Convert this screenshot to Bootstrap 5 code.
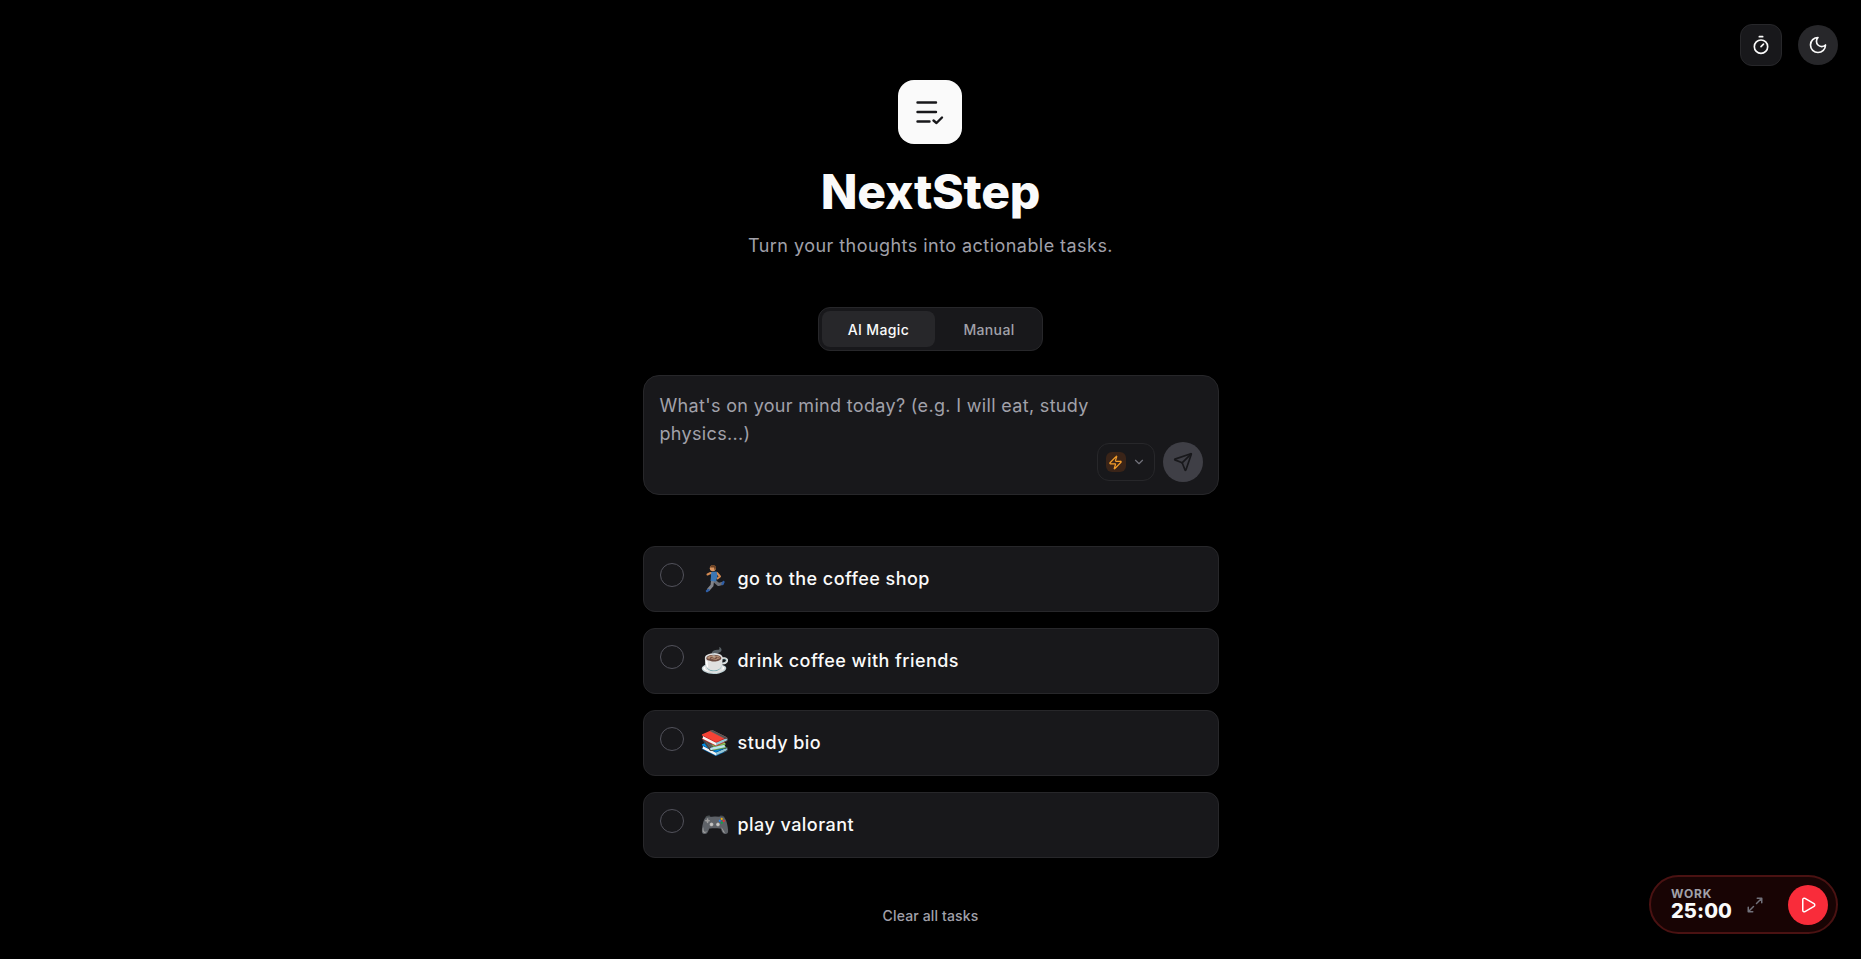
<!DOCTYPE html>
<html lang="en">
<head>
    <meta charset="UTF-8">
    <meta name="viewport" content="width=device-width, initial-scale=1.0">
    <title>NextStep</title>
    <link href="https://cdn.jsdelivr.net/npm/bootstrap@5.3.3/dist/css/bootstrap.min.css" rel="stylesheet">
    <style>
        html, body { height: 100%; }
        body { background-color: #000; color: #fafafa; font-family: "Inter", "Noto Sans", sans-serif; overflow: hidden; }
        .app-col { width: 576px; padding-top: 80px; }
        .logo-box { width: 64px; height: 64px; background: #fafafa; border-radius: 16px; margin-right: 1px; }
        .app-title { font-size: 48px; line-height: 48px; font-weight: 800; margin: 24px 0 0; color: #fafafa; letter-spacing: -0.2px; }
        .app-sub { font-size: 18px; line-height: 28px; color: #a1a1aa; margin: 16px 0 0; letter-spacing: 0.45px; }
        .mode-tabs { margin-top: 47px; width: 225px; height: 44px; padding: 3px; background: #18181b; border: 1px solid #27272a; border-radius: 12px; }
        .mode-tab { height: 36px; border-radius: 8px; font-size: 14px; font-weight: 500; color: #a1a1aa; letter-spacing: 0.35px; flex-shrink: 0; }
        .mode-tab.on { width: 113px; background: #27272a; color: #fafafa; }
        .mode-tab.off { width: 104px; margin-left: 2px; }
        .input-box { margin-top: 24px; height: 120px; background: #18181b; border: 1px solid #27272a; border-radius: 16px; padding: 16px 16px 0; }
        .input-hint { width: 460px; font-size: 18px; line-height: 28px; color: #a1a1aa; letter-spacing: 0.33px; }
        .input-tools { right: 15px; bottom: 12px; }
        .model-pick { width: 58px; height: 38px; border: 1px solid #27272a; border-radius: 12px; padding-left: 8px; gap: 6px; }
        .bolt-box { width: 20px; height: 20px; background: #3a2418; border-radius: 6px; }
        .send-btn { width: 40px; height: 40px; background: #3f3f46; }
        .task-list { margin-top: 51px; gap: 16px; }
        .task-row { height: 66px; background: #18181b; border: 1px solid #27272a; border-radius: 12px; padding: 16px; gap: 17px; }
        .task-check { width: 24px; height: 24px; border: 1px solid #52525b; border-radius: 50%; flex-shrink: 0; }
        .task-text { font-size: 18px; font-weight: 500; line-height: 32px; color: #fafafa; gap: 8px; letter-spacing: 0.45px; }
        .task-emoji { font-family: "Noto Color Emoji", sans-serif; font-size: 24px; width: 29px; text-align: center; letter-spacing: 0; }
        .clear-link { margin-top: 48px; font-size: 14px; font-weight: 500; line-height: 20px; color: #a1a1aa; letter-spacing: 0.15px; }
        .top-tools { top: 24px; right: 23px; gap: 16px; }
        .tool-square { width: 42px; height: 42px; background: #18181b; border: 1px solid #27272a; border-radius: 12px; }
        .tool-round { width: 40px; height: 40px; background: #27272a; }
        .timer-pill { right: 23px; bottom: 25px; width: 189px; height: 59px; background: #180404; border: 2px solid #4a1212; border-radius: 30px; padding: 0 7px 0 20px; }
        .timer-label { font-size: 12px; line-height: 12px; font-weight: 700; letter-spacing: 0.8px; color: #a1a1aa; }
        .timer-time { font-size: 20px; line-height: 22px; font-weight: 800; letter-spacing: 0.1px; color: #fafafa; }
        .timer-play { width: 40px; height: 40px; background: #f92c3a; }
        .timer-expand { margin-left: 14px; margin-right: 24px; }
    </style>
</head>
<body>
    <div class="position-fixed d-flex align-items-center top-tools">
        <div class="tool-square d-flex align-items-center justify-content-center">
            <svg width="20" height="20" viewBox="0 0 24 24" fill="none" stroke="#fafafa" stroke-width="2" stroke-linecap="round" stroke-linejoin="round"><line x1="10" x2="14" y1="2" y2="2"/><line x1="12" x2="15" y1="14" y2="11"/><circle cx="12" cy="14" r="8"/></svg>
        </div>
        <div class="tool-round rounded-circle d-flex align-items-center justify-content-center">
            <svg width="20" height="20" viewBox="0 0 24 24" fill="none" stroke="#fafafa" stroke-width="2" stroke-linecap="round" stroke-linejoin="round"><path d="M12 3a6 6 0 0 0 9 9 9 9 0 1 1-9-9Z"/></svg>
        </div>
    </div>

    <div class="app-col mx-auto d-flex flex-column align-items-center">
        <div class="logo-box d-flex align-items-center justify-content-center">
            <svg width="32" height="32" viewBox="0 0 32 32" fill="none" stroke="#18181b" stroke-width="2.4" stroke-linecap="round" stroke-linejoin="round"><path d="M3.5 6.5h18.5M3.5 16h18.5M3.5 25.5h12"/><path d="M19.5 24.5l3 2.5 5.5-5.5"/></svg>
        </div>
        <h1 class="app-title">NextStep</h1>
        <p class="app-sub">Turn your thoughts into actionable tasks.</p>

        <div class="mode-tabs d-flex">
            <div class="mode-tab on d-flex align-items-center justify-content-center">AI Magic</div>
            <div class="mode-tab off d-flex align-items-center justify-content-center">Manual</div>
        </div>

        <div class="input-box w-100 position-relative">
            <div class="input-hint">What's on your mind today? (e.g. I will eat, study physics...)</div>
            <div class="input-tools position-absolute d-flex align-items-center gap-2">
                <div class="model-pick d-flex align-items-center">
                    <div class="bolt-box d-flex align-items-center justify-content-center">
                        <svg width="15" height="15" viewBox="0 0 24 24" fill="none" stroke="#f59e2a" stroke-width="2" stroke-linecap="round" stroke-linejoin="round"><path d="M4 14a1 1 0 0 1-.78-1.63l9.9-10.2a.5.5 0 0 1 .86.46l-1.92 6.02A1 1 0 0 0 13 10h7a1 1 0 0 1 .78 1.63l-9.9 10.2a.5.5 0 0 1-.86-.46l1.92-6.02A1 1 0 0 0 11 14z"/></svg>
                    </div>
                    <svg width="14" height="14" viewBox="0 0 24 24" fill="none" stroke="#71717a" stroke-width="2" stroke-linecap="round" stroke-linejoin="round"><path d="m6 9 6 6 6-6"/></svg>
                </div>
                <div class="send-btn rounded-circle d-flex align-items-center justify-content-center">
                    <svg width="20" height="20" viewBox="0 0 24 24" fill="none" stroke="#18181b" stroke-width="2" stroke-linecap="round" stroke-linejoin="round"><path d="M14.536 21.686a.5.5 0 0 0 .937-.024l6.5-19a.496.496 0 0 0-.635-.635l-19 6.5a.5.5 0 0 0-.024.937l7.93 3.18a2 2 0 0 1 1.112 1.11z"/><path d="m21.854 2.147-10.94 10.939"/></svg>
                </div>
            </div>
        </div>

        <div class="task-list w-100 d-flex flex-column">
            <div class="task-row d-flex">
                <div class="task-check"></div>
                <div class="task-text d-flex">
                    <!-- installed emoji font has the runner facing left in teal, so it is drawn -->
                    <svg class="task-emoji" width="29" height="32" viewBox="7 4 29 32" fill="none" stroke-linecap="round" stroke-linejoin="round">
                        <path d="M20.5 22L24.5 25.5L28 24.5" stroke="#6e7077" stroke-width="3"/>
                        <path d="M18.5 22L18 26.5L14.5 30.5" stroke="#82848b" stroke-width="3"/>
                        <path d="M28.5 25L29.5 23" stroke="#2f5ea6" stroke-width="2.4"/>
                        <path d="M13 32L14.5 31" stroke="#2f5ea6" stroke-width="2.4"/>
                        <path d="M23 14L26 17.5L23.5 19.5" stroke="#d38a52" stroke-width="2"/>
                        <path d="M16.5 13L22.5 12.5L23.5 17L22 22.5L16.5 22L17 17Z" fill="#3b76b4"/>
                        <path d="M16.5 14L13.5 15.5" stroke="#d38a52" stroke-width="2"/>
                        <circle cx="18.8" cy="9.2" r="3" fill="#d99560"/>
                        <path d="M16 8.5C16 5.5 21.5 5 22 8.5C22 10 21 11 20.5 11L20 8.5Z" fill="#6e4324"/>
                    </svg>
                    <span>go to the coffee shop</span>
                </div>
            </div>
            <div class="task-row d-flex">
                <div class="task-check"></div>
                <div class="task-text d-flex"><span class="task-emoji">☕</span><span>drink coffee with friends</span></div>
            </div>
            <div class="task-row d-flex">
                <div class="task-check"></div>
                <div class="task-text d-flex"><span class="task-emoji">📚</span><span>study bio</span></div>
            </div>
            <div class="task-row d-flex">
                <div class="task-check"></div>
                <div class="task-text d-flex"><span class="task-emoji">🎮</span><span>play valorant</span></div>
            </div>
        </div>

        <div class="clear-link">Clear all tasks</div>
    </div>

    <div class="timer-pill position-fixed d-flex align-items-center">
        <div>
            <div class="timer-label">WORK</div>
            <div class="timer-time">25:00</div>
        </div>
        <svg class="timer-expand" width="18" height="18" viewBox="0 0 24 24" fill="none" stroke="#71717a" stroke-width="2" stroke-linecap="round" stroke-linejoin="round"><path d="M15 3h6v6M21 3l-7 7M3 21l7-7M3 15v6h6"/></svg>
        <div class="timer-play rounded-circle d-flex align-items-center justify-content-center">
            <svg width="18" height="18" viewBox="0 0 24 24" fill="none" stroke="#fff" stroke-width="2" stroke-linecap="round" stroke-linejoin="round"><path d="M5 5a2 2 0 0 1 3.008-1.728l11.997 6.998a2 2 0 0 1 .003 3.458l-12 7A2 2 0 0 1 5 19z"/></svg>
        </div>
    </div>

    <script src="https://cdn.jsdelivr.net/npm/bootstrap@5.3.3/dist/js/bootstrap.bundle.min.js"></script>
</body>
</html>
